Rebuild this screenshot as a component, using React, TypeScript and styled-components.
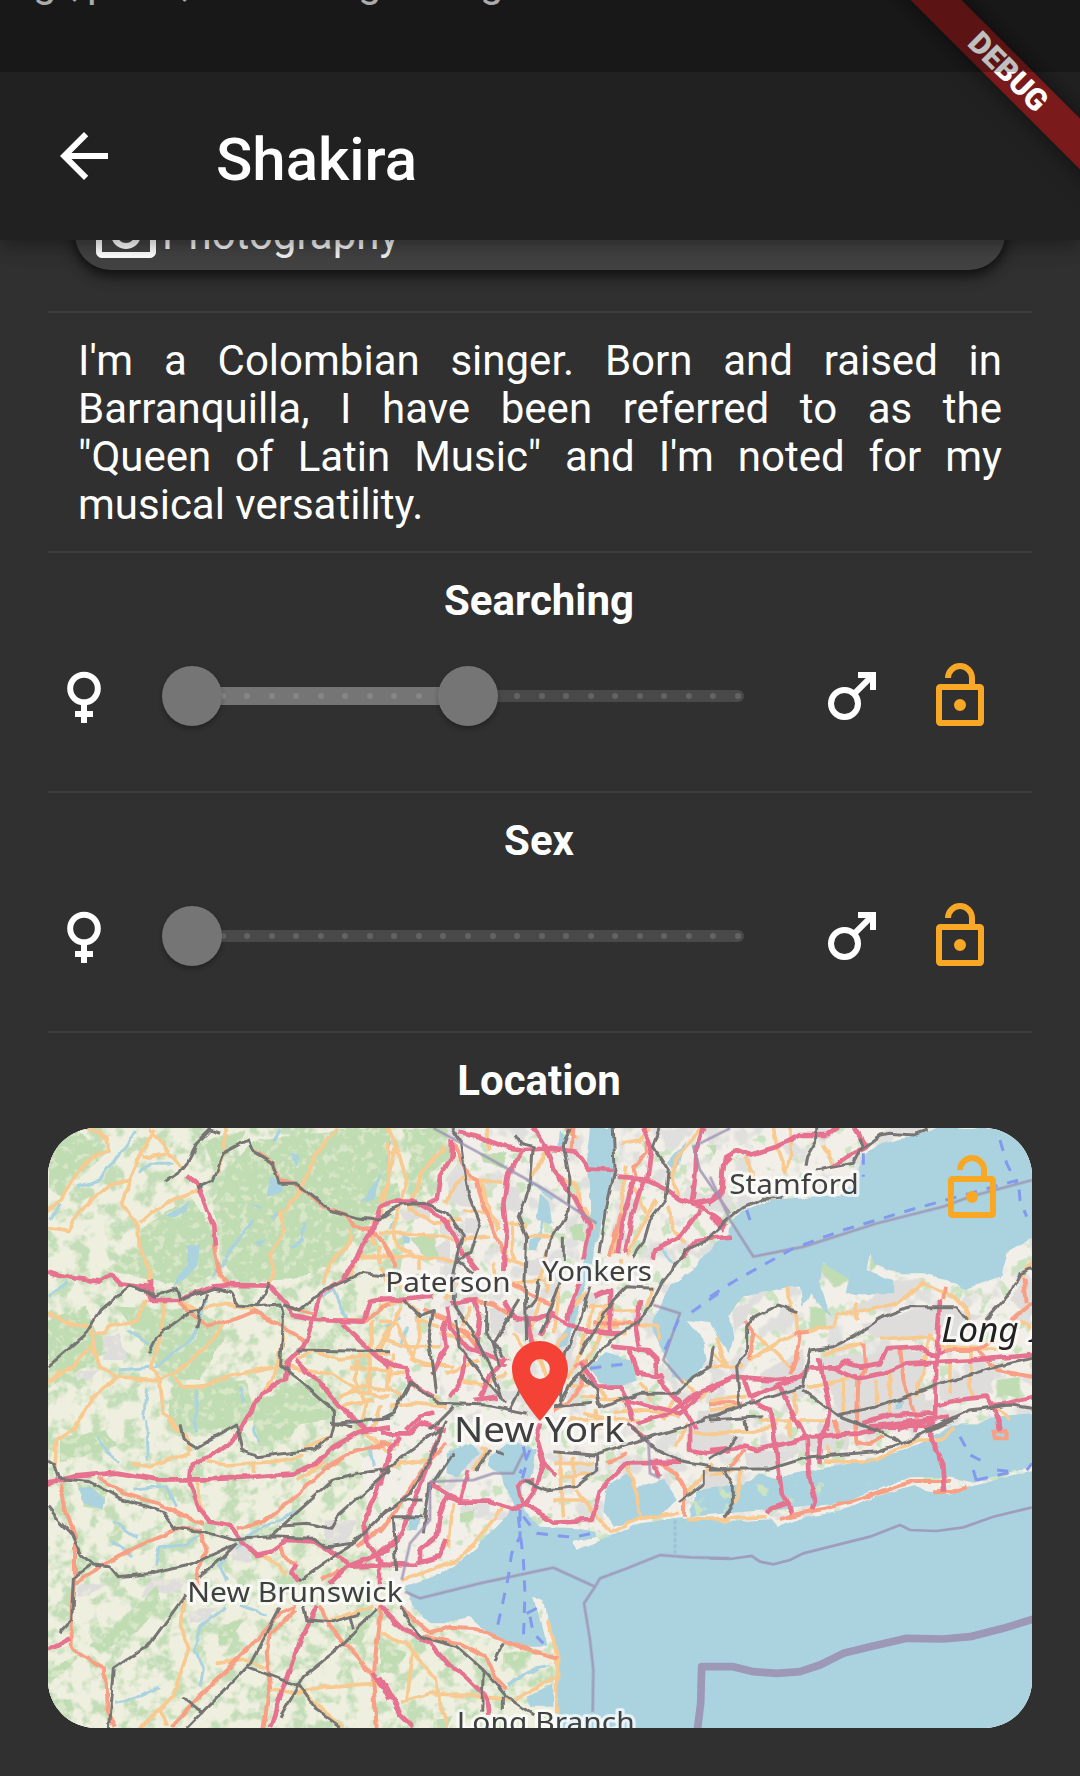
import React from "react";
import styled, { createGlobalStyle } from "styled-components";

const GlobalStyle = createGlobalStyle`
  * { box-sizing: border-box; }
  body { margin: 0; background: #303030; }
`;

const Screen = styled.div`
  position: relative;
  display: flex;
  flex-direction: column;
  width: 1080px;
  height: 1776px;
  overflow: hidden;
  background: #303030;
  color: #fff;
  font-family: Roboto, "Noto Sans", sans-serif;
`;

const Header = styled.header`
  position: relative;
  z-index: 2;
  flex: none;
  height: 240px;
  background: #212121;
  box-shadow: 0 6px 12px -3px rgba(0, 0, 0, 0.18), 0 10px 14px rgba(0, 0, 0, 0.1),
    0 3px 28px rgba(0, 0, 0, 0.1);
`;

const HiddenLine = styled.div`
  display: flex;
  height: 72px;
  overflow: hidden;
  font-size: 42px;
  line-height: 48px;
  color: #e4e4e4;
  span { display: block; width: 0; white-space: nowrap; margin-top: -42px; }
`;

const Gap = styled.i<{ $w: number }>`
  flex: none;
  width: ${(p) => p.$w}px;
`;

const Toolbar = styled.div`
  display: flex;
  align-items: center;
  height: 168px;
  padding-left: 48px;
  gap: 96px;
`;

const Title = styled.h1`
  margin: 8px 0 0;
  font-size: 60px;
  font-weight: 500;
  line-height: 70px;
`;

const Scrim = styled.div`
  position: absolute;
  z-index: 4;
  top: 0;
  left: 0;
  width: 100%;
  height: 72px;
  background: rgba(0, 0, 0, 0.25);
`;

const Banner = styled.div`
  position: absolute;
  z-index: 3;
  top: 54px;
  left: 858px;
  width: 300px;
  height: 36px;
  transform: rotate(45deg);
  background: #7b1a1a;
  box-shadow: 0 0 22px rgba(0, 0, 0, 0.55);
  text-align: center;
  font-size: 30.6px;
  font-weight: 900;
  line-height: 36px;
`;

const Body = styled.main`
  flex: 1;
  display: flex;
  flex-direction: column;
  overflow: hidden;
  padding: 0 48px;
`;

const Interest = styled.div`
  flex: none;
  display: flex;
  align-items: center;
  height: 84px;
  margin: -54px 27px 41px;
  padding: 6px 15px 0;
  border-radius: 36px;
  background: #424242;
  box-shadow: 0 6px 12px rgba(0, 0, 0, 0.5), 0 3px 18px rgba(0, 0, 0, 0.35);
  font-size: 42px;
  color: #fff;
`;

const InterestLabel = styled.span`
  padding-top: 6px;
  color: #f2f2f2;
`;

const Divider = styled.hr`
  flex: none;
  width: 100%;
  height: 2px;
  margin: 0;
  border: 0;
  background: #3d3d3d;
`;

const Bio = styled.p`
  flex: none;
  height: 238px;
  margin: 0;
  padding: 24px 30px 0;
  font-size: 42px;
  line-height: 48px;
  text-align: justify;
`;

const Section = styled.section<{ $tall?: boolean }>`
  flex: none;
  height: ${(p) => (p.$tall ? "auto" : "238px")};
`;

const Heading = styled.h2`
  margin: 0;
  padding: 24px 2px 0 0;
  text-align: center;
  font-size: 42px;
  font-weight: 700;
  line-height: 48px;
  height: 95px;
`;

const Row = styled.div`
  display: flex;
  align-items: center;
  height: 96px;
`;

const Icon = styled.svg<{ $size?: number }>`
  display: block;
  flex: none;
  width: ${(p) => p.$size ?? 72}px;
  height: ${(p) => p.$size ?? 72}px;
  fill: currentColor;
`;

const Amber = styled.div<{ $left: number }>`
  margin-left: ${(p) => p.$left}px;
  color: #f9a825;
`;

const Slider = styled.div`
  position: relative;
  display: flex;
  align-items: center;
  flex: none;
  width: 552px;
  height: 60px;
  margin: 0 72px;
`;

const Track = styled.div`
  width: 552px;
  height: 12px;
  border-radius: 6px;
  background: #494949;
`;

const Active = styled.div`
  position: absolute;
  left: 0;
  top: 21px;
  height: 18px;
  background: #757575;
`;

const Tick = styled.i<{ $on: boolean }>`
  position: absolute;
  top: 27px;
  width: 6px;
  height: 6px;
  border-radius: 50%;
  background: ${(p) => (p.$on ? "#868686" : "#636363")};
`;

const Thumb = styled.div`
  position: absolute;
  top: 0;
  width: 60px;
  height: 60px;
  margin-left: -30px;
  border-radius: 50%;
  background: #757575;
  box-shadow: 0 3px 5px rgba(0, 0, 0, 0.28);
`;

const MapCard = styled.div`
  position: relative;
  width: 984px;
  height: 600px;
  overflow: hidden;
  border-radius: 48px;
  background: #f2efe9;
`;

const MapArt = styled.svg`
  display: block;
  width: 984px;
  height: 600px;
`;

const MapLock = styled.div`
  position: absolute;
  top: 24px;
  right: 24px;
  color: #f9a825;
`;

const MapPin = styled.div`
  position: absolute;
  top: 205px;
  left: 443.5px;
  color: #f44336;
`;

const Female = () => (
  <Icon viewBox="0 0 24 24">
    <circle cx="12" cy="9.5" r="4.6" fill="none" stroke="currentColor" strokeWidth="2" />
    <path d="M11 14.5h2V17h2v2h-2v2h-2v-2H9v-2h2z" />
  </Icon>
);

const Male = () => (
  <Icon viewBox="0 0 24 24">
    <circle cx="9.5" cy="14.5" r="4.5" fill="none" stroke="currentColor" strokeWidth="2" />
    <path d="M20 4v6h-2V7.41l-4.7 4.7-1.41-1.41L16.59 6H14V4z" />
  </Icon>
);

const LockOpen = () => (
  <Icon viewBox="0 0 24 24">
    <path d="M18 20V10H6v10h12M18.600 8A1.4 1.4 0 0 1 20 9.400V20.600A1.4 1.4 0 0 1 18.600 22H5.400A1.4 1.4 0 0 1 4 20.600V9.400A1.4 1.4 0 0 1 5.400 8H15V6a3 3 0 0 0-6 0H7a5 5 0 0 1 10 0v2h1.600M12 17a2 2 0 1 1 0-4 2 2 0 0 1 0 4z" />
  </Icon>
);

const TICKS = Array.from({ length: 23 }, (_, i) => 6 + (i * 540) / 22);

function RangeSlider({ from, to }: { from: number; to?: number }) {
  const end = to ?? from;
  return (
    <Slider>
      <Track />
      {end > from && <Active style={{ width: end * 552 }} />}
      {TICKS.map((x, i) => (
        <Tick key={i} $on={x < end * 552} style={{ left: x - 3 }} />
      ))}
      <Thumb style={{ left: from * 552 }} />
      {end > from && <Thumb style={{ left: end * 552 }} />}
    </Slider>
  );
}

function Preference({ title, from, to }: { title: string; from: number; to?: number }) {
  return (
    <Section>
      <Heading>{title}</Heading>
      <Row>
        <Female />
        <RangeSlider from={from} to={to} />
        <Male />
        <Amber $left={36}><LockOpen /></Amber>
      </Row>
    </Section>
  );
}

type Tile = {
  x: number;
  y: number;
  green?: string;
  urban?: string;
  lake?: string;
  stream?: string;
  minor: string;
  trunk: string;
  motorway: string;
  rail: string;
  border?: string;
  ferry?: string;
};

/* Each tile is traced in its own local units; x and y place it on the map. */
const TILES: Tile[] = [
  {
    x: 0, y: 0,
    green: "M24 60L110 30 200 100 120 160 60 230 24 200ZM560 150L640 60 900 30 1050 24 1050 230 960 330 900 420 760 480 600 490 540 420 520 250ZM300 330L450 230 520 330 540 450 450 500 330 480 200 450 290 380ZM24 600L140 560 200 700 100 760 24 800ZM230 560L480 570 560 640 480 780 370 770 330 700ZM400 800L620 780 640 900 540 930 380 930ZM640 850L850 760 870 900 640 930ZM490 60L620 30 600 70 520 150Z",
    urban: "M190 650L240 640 260 720 190 720ZM560 180L600 190 590 230 560 220ZM820 800L870 840 860 890 820 860ZM110 750L180 750 150 780 110 775Z",
    lake: "M440 380L480 370 470 440 430 480 400 500 440 430ZM380 290L450 240 440 270 400 295ZM690 170L730 190 720 220 680 230ZM640 370L680 360 660 380ZM960 250L1000 200 1020 150 1010 230ZM750 100L780 110 770 140ZM630 250L660 260 650 270Z",
    stream: "M290 30L240 100 180 180 110 200M640 300L560 410 520 470M790 300L790 360 750 380M500 540L460 650 350 740 240 750M320 800L310 900M260 630L330 670M900 560L920 600M470 810L465 930M830 540L880 510 910 580M700 300L740 260M720 30L700 60M60 250L35 300M24 530L80 490M400 130L330 130 300 160M600 800L610 850",
    minor: "M140 24L200 50 210 90 150 115 105 170 60 240 24 275M24 325L85 335 110 290 160 230 210 195 270 180 300 110 330 55 345 24M330 24L350 55 400 110 430 150M310 110L380 100M270 180L245 250 290 310 295 380 330 450 325 500M300 310L340 275 410 235 470 210M24 575L80 610 150 615 160 690 180 740 230 770 360 780 430 740 500 680 560 600M150 640L190 640 210 620 290 600 320 540M24 785L100 740 150 680M230 770L160 830 100 930M370 540L370 620 335 740 360 780 370 880 420 930M400 770L430 800 490 800 560 770 720 735 870 760 960 820 1050 830M555 24L555 90 530 160M890 30L830 100 800 170 770 230 725 280 730 330 690 400 705 470 680 500M1050 160L1020 290M1040 60L1050 160M930 330L930 370 870 430 850 490M420 545L470 570 560 550 640 570M730 600L730 660 700 780 640 850M770 720L820 690 900 720 1050 700M960 700L940 780 980 850 960 930M1000 600L990 700 990 820M1050 620L1000 700M900 830L970 800 1050 810M1000 380L1000 300M1050 410L950 410 930 470M1020 850L1000 930M930 740L1050 750M900 860L1000 840M1020 380L1020 430",
    trunk: "M520 370L535 450 570 500M415 545L500 620 580 600 640 575 730 620 790 660M640 90L700 130 720 180 780 195 850 260 920 285 940 320 1000 330 1030 370 1050 410M1050 550L980 600 820 600M740 560L820 580",
    motorway: "M24 455L100 475 180 485 215 465 240 490 320 500 330 540 420 540 520 500 570 495 690 497 740 550 760 585 830 600 970 605 990 545 1050 535M330 480L330 540M440 165L470 190 490 240 520 320 525 380M1050 245L1020 260 1000 330 950 410 910 480 840 520 820 600 790 680 740 730 735 780 660 825 640 860 600 930M910 610L960 660 1010 710 1050 740M770 720L850 800 900 860 980 930",
    rail: "M375 185L420 155 440 130 470 70 510 30 540 40M470 205L520 180 550 100 625 60 640 95 700 130 720 190 775 190 870 270 960 295 1015 300 1050 275M24 740L130 650 180 570 270 495 315 510 340 530 410 505 420 540 520 505 570 515 590 555 650 560 720 555 730 600 722 735 800 800 880 870 880 910 950 905 1050 895M500 520L485 570 450 575 350 650 325 700M485 560L470 625M650 560L690 490M730 555L780 570 850 510 920 480 960 460 1050 470M770 690L1050 695",
  },
  {
    x: 1020, y: 0,
    green: "M70 30L200 24 210 110 140 170 100 240 80 190 90 110ZM0 180L50 190 60 240 0 240ZM90 350L160 345 180 420 120 400ZM300 100L380 100 370 140 310 130ZM570 320L610 310 615 370 580 360ZM980 70L1010 80 1000 110Z",
    urban: "M200 180L260 150 280 260 210 250ZM160 380L210 360 210 430 170 430ZM60 270L150 260 150 300 70 300ZM260 290L300 300 290 350 250 340ZM330 560L380 560 380 650 330 640ZM440 420L490 410 480 470 440 460ZM370 200L420 200 420 260 380 270ZM540 640L600 640 560 760 500 760ZM950 880L1050 860 1050 930 950 930Z",
    lake: "M630 24L700 24 700 140 680 250 660 330 640 420 600 540 560 680 530 690 580 560 610 430 630 330 630 200 620 110ZM620 740L680 700 750 720 770 780 720 800 660 790ZM480 220L510 250 520 310 470 300ZM450 360L480 350 470 390 450 390ZM860 130L920 60 900 130 880 150ZM70 340L90 350 85 370 70 370ZM540 30L560 60 550 90 535 80Z",
    stream: "M30 60L20 130M440 180L520 240M490 300L470 380M20 620L60 590M80 620L60 680M40 300L30 330M840 380L880 430",
    minor: "M24 24L50 80 30 160 5 240M50 80L80 180 60 250M200 80L130 150 100 230 100 260M60 250L40 320 50 380 100 410 230 420M80 260L160 310 250 300M0 340L110 340 250 360 330 350M240 170L300 180 370 190M200 250L220 200 260 160M370 300L440 320M0 410L120 410 120 450M400 300L400 430M440 350L520 350M540 180L590 190 600 260M610 260L640 330M560 24L590 60M500 90L470 150 450 170M720 70L780 60 810 24M960 30L900 100 870 170 900 230M740 140L720 280 700 400M760 200L800 280M830 240L780 330 740 410M860 260L880 330 920 370M400 490L500 480 500 520M0 560L60 540 110 570 120 650 90 720M60 560L20 650 0 690M20 660L80 680 180 680M180 640L230 650 300 640M100 800L180 840M30 860L100 850 200 860M540 500L520 640M580 560L620 520M640 560L600 700 560 780M700 540L640 690 600 740M680 570L780 570M700 600L830 620 840 660M560 800L640 790 680 830M600 830L740 840M900 780L960 830 1000 800M1000 700L1040 740M700 880L800 870 900 890M300 800L380 760M200 760L300 720M820 500L800 560M0 600L50 610 100 720 180 740M40 700L20 800 70 830M120 730L220 740M380 300L380 420 440 440M250 270L330 280M500 400L480 480M460 660L500 780 490 860M400 640L440 700 400 780M620 560L680 560 640 620M660 620L720 620M230 480L200 540M340 430L350 520M300 180L330 280 360 330M20 760L90 760M110 600L180 620M240 780L330 800M250 620L270 560M520 700L560 640M670 640L740 640M60 90L20 110M610 880L700 900M780 790L820 840M880 840L850 900M720 420L720 490M480 540L450 640M330 90L320 24M650 870L660 930M560 900L780 900M20 480L90 510M0 440L30 500",
    trunk: "M215 60L250 140 290 180 310 260 350 350 370 400M720 280L690 410M0 350L30 400 50 440M400 490L450 520 520 560M260 540L340 550 400 590M800 60L800 100 760 140 770 180M560 30L580 24 575 90M130 570L200 600 260 640 300 690M640 610L780 610M580 740L620 720 600 800 560 850 520 870M370 410L370 450",
    motorway: "M0 260L40 245 100 245 130 260 180 290 230 350 250 400 290 450M130 260L170 240 180 170 215 110 215 60M235 35L300 50 370 80 430 90 500 85 590 95 625 145 700 150M430 90L385 160 370 250 380 340 370 450M460 24L500 85 520 150 580 230 630 320 610 420M710 170L790 175 860 210 900 240 960 260 1040 320M760 180L730 290 712 400M790 180L758 280 735 400M790 24L815 80 800 190M970 24L950 90 945 180 935 250M940 250L1000 240 1025 200 1030 130 1050 110M960 270L900 350 820 390 815 420M1050 350L950 360 900 420M0 535L60 540 160 530M200 560L210 620 260 680 360 720 380 740M280 540L300 600 290 690M370 540L400 590 460 600 510 580 540 600 600 630 720 640M600 480L560 600M210 550L290 540M0 715L50 740 80 745 90 790 160 830M190 600L200 680 160 760M260 700L240 790 210 830M380 710L330 770 300 830M440 600L460 690M520 570L480 650M640 530L690 510 690 640M690 680L800 690 830 720 830 760 850 800 900 850 950 930M600 730L650 800 720 800 740 840 760 900M780 540L770 620 780 680M750 690L770 760 850 770M1050 780L930 830 870 880 770 910M740 840L900 880 960 820M280 840L350 830M80 930L120 890 160 880",
    rail: "M215 24L240 60 250 130 265 220 300 310 270 400 230 420 220 470 220 550 280 640 320 720 370 840M0 290L60 255 130 250 200 280 250 350 230 420 280 460M405 45L420 70 460 80 450 200 415 290 440 350 435 480 440 660M570 24L550 80 570 180 565 270 510 360 500 410M550 350L550 420M700 24L705 150 680 260 660 400M630 500L600 600 560 700 540 860M840 24L820 80 865 150 855 240 810 300 790 370 760 410M1050 290L980 360 920 390 850 480 810 560 770 610 690 660 640 720 580 780 540 850M480 480L470 530 440 570M540 490L500 600 480 640M70 540L120 590 160 575 145 650 160 740 170 820M320 540L320 640 360 690 370 710M420 540L340 670 360 740M820 505L740 500 700 540 600 700M0 900L40 880 90 790 180 850 320 855 440 880M390 870L420 810M220 860L150 930M520 860L640 850M600 760L650 810 660 860 780 820 890 820 940 770 990 740 1000 680M920 920L1050 870M230 600L240 680 300 760 380 850",
    border: "M160 24L300 100 480 200 650 310M1050 25L940 80 960 150 1050 280M820 555L900 580 850 720 910 790",
    ferry: "M1015 520L930 580M895 600L850 700M630 745L750 730",
  },
  {
    x: 2010, y: 0,
    green: "M330 430L420 450 430 480 370 500 340 470ZM860 780L930 770 930 830 860 830ZM480 410L500 430 480 460ZM300 560L350 570 350 620 300 640Z",
    urban: "M70 570L130 540 110 600 70 640ZM450 610L660 560 760 570 700 620 640 660 500 660ZM150 760L280 690 280 800 160 810ZM400 590L560 480 640 480 560 550ZM320 710L640 690 640 850 380 860ZM690 780L850 750 850 820 690 840ZM900 540L966 470 966 600ZM380 850L660 840 660 930 400 930ZM730 560L820 590 700 620Z",
    lake: "M780 930L850 890 966 880 966 930ZM560 840L580 840 575 865 560 865Z",
    minor: "M190 24L200 80 230 160 240 100 240 24M340 70L370 130M110 110L130 180M235 500L240 560 260 580 260 640M130 640L190 690 250 750M250 640L180 680 120 720M260 640L370 620 380 580 440 580 560 550 640 490 720 530 770 560 775 610M440 550L440 600M340 700L460 670M0 740L100 740M20 650L50 740M510 660L660 650 700 680 900 690M660 640L640 750 620 830M780 690L780 800 790 830M290 800L440 770M150 900L350 900M250 810L260 870 230 930M0 840L110 830M930 600L966 620M966 430L930 470M400 780L400 880M500 780L500 860M0 870L80 860M540 760L540 880M720 720L720 820M850 850L900 900",
    trunk: "M105 600L130 640 120 720M270 630L260 720 240 760M250 640L300 635M460 670L465 740 445 780 440 930M570 680L580 780 620 900M700 690L800 690 860 750 966 770M800 690L850 660M905 600L966 550M940 470L950 550M0 850L100 850M700 540L705 500",
    motorway: "M0 250L30 230 35 180 45 110 80 90 120 105 200 80 270 45 350 45M435 24L470 80 410 110 370 140M350 45L380 24M0 290L40 330M0 810L70 770 200 780 270 770 300 745 380 745 400 725 450 740 510 730 530 685 620 680 670 705 700 690M370 745L440 775 520 760 590 730 800 720 966 705M330 710L340 770 360 860 350 930M690 540L680 700 675 890 660 930M300 745L250 780 120 830 100 770M210 800L240 860 270 930M120 840L180 870 190 930M680 855L740 840 830 830 850 860 966 830M460 910L540 885 670 880M480 920L720 890M850 860L870 930M560 930L700 890",
    rail: "M0 350L50 300 100 260 160 235 220 232M650 30L610 45 540 40 510 45 450 90 430 130 320 150M450 50L460 80M320 24L320 60 290 110 285 140M265 575L200 555 130 590 110 620 110 700 80 740 90 860M0 890L90 860 280 800 290 740 300 690 370 680 430 650 500 600 600 560 740 560 770 600M280 810L380 885 500 930M380 885L500 860 700 790 840 745 966 715M650 930L780 870 900 855 966 865M830 600L900 520 930 460 966 445M0 900L160 890M110 900L110 930",
    border: "M0 170L60 300 130 410 280 380 500 310 700 260 780 230 966 180",
    ferry: "M0 530L70 485 160 435 250 385 400 330 600 270 780 220 925 180 930 240 950 290M870 60L890 130 920 190M460 100L460 170M110 270L120 300",
  },
  {
    x: 0, y: 900,
    green: "M150 680L250 590 350 500 370 560 270 650 180 700ZM24 750L120 700 90 740 24 790ZM110 190L200 200 190 270 130 260ZM60 50L200 30 230 80 120 110 60 120ZM650 20L780 10 750 50 660 80ZM540 620L620 590 560 680 530 680ZM920 620L1000 600 960 680 910 670ZM24 840L100 840 100 870 40 870Z",
    urban: "M340 470L440 480 420 510 300 530ZM850 300L950 300 930 370 860 370ZM570 380L640 370 630 430 580 420ZM450 570L530 560 500 610 450 610ZM110 490L200 490 150 530 110 530Z",
    lake: "M115 210L150 200 195 240 190 265 130 250Z",
    stream: "M170 50L200 100 240 125M320 0L325 120M280 210L380 200 410 260M220 305L290 350M210 360L280 410M480 340L440 375 360 380 350 440M560 400L540 440 560 480M560 560L480 620 465 690 490 750 480 800M640 20L660 70M600 560L680 585M225 850L280 840 360 800M590 390L650 330 780 270M460 0L470 40M990 80L1000 140",
    minor: "M45 140L50 60 120 10M275 130L330 140 450 100M380 0L440 50 450 95M500 125L560 135 700 125 790 110M640 130L640 160M660 400L690 420 740 465M470 180L490 290M430 530L425 620 445 690 420 760 400 830 330 900 300 924M530 730L620 720 680 745M360 870L380 920M690 810L780 820 850 800 1010 790M780 810L860 880 910 920M870 600L1000 560M770 180L850 130M790 90L870 45M980 40L1050 100",
    trunk: "M60 190L80 280 105 350 105 450 95 560 95 680 130 710 195 745 200 870 225 920M180 175L250 220 350 250 450 295 490 310M100 490L200 430 330 360 410 325 480 330M480 340L500 390 480 430 465 500M590 325L670 305 780 220 850 150 950 90 1050 70M720 370L740 420 770 430M390 924L500 810 620 690 720 580 770 560M770 570L690 640 680 700 690 800 670 924M840 560L870 620 950 710 1020 790M1020 560L1000 780 1010 924M840 480L900 450M950 380L1050 300",
    motorway: "M24 188L100 170 230 158 350 178 500 178 620 172 760 160 830 130 880 80 960 35 1050 22M620 0L580 60 510 110 455 130 450 190 480 270 510 305 570 315 610 370 650 405 690 395 740 360 830 365 900 410M24 690L90 655M690 924L730 800 780 660 830 560M1050 100L1000 240 970 310 980 370 1020 420 1020 500M870 490L920 440 1050 390M900 410L930 440 1050 435M770 430L755 460 780 480M1000 760L1030 800 1050 840",
    rail: "M24 120L40 130 55 175 150 185 240 235 370 275 405 325 490 335 580 360 690 350 820 355 860 380 940 370M24 260L60 305 95 340 120 400 160 435 210 440 235 470 340 460 450 435 590 370M420 10L430 60 470 85 510 60 590 15 605 90 650 110 820 90 870 50 880 10M150 435L100 470 95 600 60 640M440 520L330 670 220 745 205 924M440 924L630 730 720 560M620 740L700 770 780 800 830 870 900 920M780 480L850 430 930 380 1050 260M690 350L880 180 950 160 1050 148M730 315L800 310 870 325 890 290 1050 150M590 370L540 420 480 470M720 890L790 770 890 690 1010 570M790 560L800 600 880 605 960 580M930 590L940 625M425 830L490 880M870 10L940 20",
  },
  {
    x: 1020, y: 900,
    green: "M240 280L290 270 270 310 240 310ZM370 700L450 690 430 740 370 740ZM0 660L80 700 40 760 0 750ZM160 900L220 890 200 924 160 924Z",
    urban: "M930 30L1050 20 1050 90 940 90ZM980 130L1050 150 1050 220 970 230Z",
    lake: "M680 200L740 160 770 200 850 180 890 240 850 280 700 320 670 280ZM200 100L270 70 300 100 230 170 200 160ZM380 790L460 740 520 730 430 770 390 800ZM440 830L520 790 520 860 450 860ZM950 210L1030 200 1040 280 930 290ZM90 280L120 290 110 330 90 330Z",
    minor: "M70 480L150 450 230 420 300 350 370 260M220 250L205 380M740 130L770 220 780 290M650 290L690 340 780 295 900 280M920 295L1050 300M500 600L530 700 530 880M0 640L80 670 170 780 180 860 200 920M100 690L80 850M60 850L150 820 300 830 400 840 530 770M300 80L320 90 280 150M520 130L640 130M540 100L550 290M520 240L620 240M590 210L650 290M0 150L60 130 140 120M920 10L890 80M1000 130L920 220M540 170L640 160M580 110L580 210M940 40L1050 40",
    trunk: "M60 560L150 640 210 620 290 625 380 665 450 690 530 712M130 650L240 670 320 710 350 780 380 810M0 340L60 250 140 130 200 70M680 130L740 100M840 130L890 160 915 210 915 290M0 70L60 70",
    motorway: "M0 430L110 435M0 560L60 620 150 670 200 730 260 770 320 830 325 884M0 770L60 880 100 920M120 430L120 390 170 350 180 280 200 230 240 245M150 190L240 245 330 245 390 265 430 255 490 285 520 305 635 300 660 210 740 130 900 128M0 40L90 40 120 10 200 30M265 150L240 240M430 260L415 200 430 180 460 180M430 260L460 220 490 130 470 60 480 10M490 130L530 170M110 430L180 410 200 360M740 10L800 60M930 20L930 90 980 100 1050 90M0 400L60 350M180 40L100 250 60 350M0 200L30 90 60 50M820 130L840 170",
    rail: "M200 0L180 40 150 120 90 220 0 290M0 160L80 100 190 20M60 560L120 650 230 680 310 750 380 830 460 885M310 750L305 875M370 670L345 720M370 830L370 870M160 190L220 100M150 190L130 340M40 290L50 450M430 180L500 210 590 200 650 150 650 100M520 95L640 105 780 60 930 15M740 10L830 90 900 125 1050 150M970 150L970 190 900 245M330 90L290 150M350 90L370 100M40 290L130 290M60 240L130 240",
    border: "M75 515L120 535 300 490 520 443 645 500 660 475 740 445 840 405 930 412 1050 415M645 500L612 550 630 660 640 750 638 875M150 185L280 180 340 160 400 160 430 100M150 190L150 300 90 370 65 480M805 60L810 160 840 175",
    ferry: "M420 270L420 350 395 400 385 470 370 540 350 630M415 290L430 420 435 520 430 660M430 290L470 340 580 352 660 335M440 580L480 560M450 590L460 640 490 670M430 80L440 130 420 200M450 90L420 160",
  },
  {
    x: 2010, y: 900,
    green: "M380 60L400 60 395 85 380 85ZM780 10L820 10 800 30Z",
    urban: "M0 40L100 50 90 80 0 90ZM100 100L280 90 200 140 110 140ZM320 10L420 0 410 90 340 90ZM370 130L460 130 400 160Z",
    minor: "M0 40L130 35 200 10M240 0L240 50M350 80L360 110M340 120L480 125 560 90 620 60 690 60 730 20M90 150L80 250M0 298L170 290M0 165L70 150",
    trunk: "M210 298L270 280 350 265 460 235 610 183 720 183M670 217L730 215 770 203M435 70L480 75 520 50M60 140L100 90M370 0L390 40M435 0L440 80M850 35L890 30 890 55 855 55Z",
    motorway: "M0 90L100 80 140 90 230 70 300 50 450 40 530 20 660 20M185 0L200 100 215 220 250 280M260 0L290 60 295 150 315 240 305 270M355 0L330 60 325 130M660 0L665 60 700 130 705 215M230 250L180 265 170 280M865 0L865 25M620 0L620 40",
    rail: "M0 147L180 147 300 110 500 95 600 60 730 0M0 120L60 80 80 50M40 150L70 200 70 250 45 290M410 0L500 30 570 65M105 0L110 30",
    border: "M0 415L60 417 125 408 150 425 190 433 240 420 280 400 480 350 570 315 600 330 680 333 760 322 850 290 966 262",
    ferry: "M750 50L780 105 820 125M790 150L800 185M800 180L910 155 860 150M950 150L966 130",
  },
];

const SOUND =
  "M1830 620L1890 500 1960 450 2000 400 2060 340 2080 300 2110 270 2190 240 2310 230 2400 225 2450 180 2460 120 2510 75 2650 40 2690 24H2990V345L2900 400 2880 470 2770 510 2730 480 2650 460 2570 460 2500 430 2490 400 2480 450 2560 480 2560 520 2420 520 2430 480 2350 430 2340 490 2370 590 2310 520 2290 560 2280 500 2250 500 2110 530 2070 590 2080 650 2070 700 2040 660 2010 610 1940 600 1990 660 2000 720 1950 790 1900 770 1870 700Z";

const OCEAN =
  "M1090 1400L1180 1370 1250 1330 1320 1270 1400 1190 1420 1150 1390 1100 1380 1060 1340 1040 1350 1010 1410 960 1490 990 1480 1050 1450 1090 1440 1160 1500 1220 1610 1225 1665 1235 1670 1250 1600 1270 1610 1290 1710 1250 1800 1210 1920 1195 2070 1205 2190 1198 2210 1222 2260 1200 2410 1170 2510 1130 2620 1095 2650 1112 2730 1125 2790 1100 2990 1050V1840H1550V1600L1520 1500 1510 1440 1480 1430 1490 1470 1500 1500 1520 1580 1450 1580 1360 1550 1290 1490 1210 1510 1170 1510 1120 1460Z";

const BAYS =
  "M2010 1110L2110 1090 2160 1060 2200 1075 2370 1040 2570 1000 2660 960 2730 915 2770 910 2990 920V1035L2800 1088 2730 1070 2610 1072 2510 1110 2410 1148 2260 1165 2010 1183Z";

const Lines = ({ k, color, w }: { k: "minor" | "trunk" | "motorway" | "rail" | "stream"; color: string; w: number }) => (
  <g fill="none" stroke={color} strokeWidth={w} strokeLinejoin="round">
    {TILES.map((t, i) => t[k] && <path key={i} transform={`translate(${t.x} ${t.y})`} d={t[k]} />)}
  </g>
);

const Areas = ({ k, color }: { k: "green" | "urban" | "lake"; color: string }) => (
  <g fill={color}>
    {TILES.map((t, i) => t[k] && <path key={i} transform={`translate(${t.x} ${t.y})`} d={t[k]} />)}
  </g>
);

type Place = { name: string; x: number; y: number; size: number; w: number; italic?: boolean };

const PLACES: Place[] = [
  { name: "Stamford", x: 2068, y: 222, size: 84, w: 388 },
  { name: "Paterson", x: 1036, y: 515, size: 84, w: 376 },
  { name: "Yonkers", x: 1506, y: 483, size: 84, w: 330 },
  { name: "New York", x: 1242, y: 966, size: 102, w: 512 },
  { name: "New Brunswick", x: 442, y: 1445, size: 84, w: 646 },
  { name: "Long Branch", x: 1250, y: 1836, size: 84, w: 534 },
  { name: "Long", x: 2704, y: 665, size: 102, w: 232, italic: true },
  { name: "Island", x: 2967, y: 665, size: 102, w: 290, italic: true },
];

const speckle = (id: string, seed: number, freq: number, rgb: string, gain: number, cut: number) => (
  <filter id={id} x="0" y="0" width="1" height="1" colorInterpolationFilters="sRGB">
    <feTurbulence type="fractalNoise" baseFrequency={freq} numOctaves="3" seed={seed} />
    <feColorMatrix values={`0 0 0 0 ${rgb.split(" ")[0]} 0 0 0 0 ${rgb.split(" ")[1]} 0 0 0 0 ${rgb.split(" ")[2]} ${gain} 0 0 0 ${cut}`} />
    <feComposite in2="SourceGraphic" operator="in" />
  </filter>
);

const WEST = "M24 24H1200L1260 120 1100 330 1040 700 960 1000 1000 1300 1120 1500 1540 1600V1824H24Z";

function RegionMap() {
  return (
    <MapArt viewBox="24 24 2952 1800">
      <defs>
        {speckle("woods", 4, 0.02, "0.765 0.868 0.72", 6, -2.85)}
        {speckle("fields", 11, 0.04, "0.935 0.94 0.86", 7, -3.75)}
        {speckle("parks", 7, 0.022, "0.80 0.89 0.76", 10, -5.9)}
        {speckle("built", 23, 0.014, "0.875 0.875 0.865", 9, -5.0)}
        {/* Wobbles traced lines and softens them like an upscaled map tile. */}
        <filter id="rough" x="0" y="0" width="1" height="1" colorInterpolationFilters="sRGB">
          <feTurbulence type="fractalNoise" baseFrequency="0.022" numOctaves="2" seed="3" />
          <feDisplacementMap in="SourceGraphic" scale="18" xChannelSelector="R" yChannelSelector="G" />
          <feGaussianBlur stdDeviation="1.6" />
        </filter>
      </defs>
      <rect x="24" y="24" width="2952" height="1800" fill="#f2efe9" />
      <rect x="24" y="24" width="2952" height="1800" filter="url(#parks)" />
      <path d="M1200 24H2976V1200H1200Z" filter="url(#built)" />
      <path d={WEST} fill="#efefe0" />
      <path d={WEST} filter="url(#woods)" />
      <g filter="url(#rough)">
        <Areas k="urban" color="#dedddb" />
        <Areas k="green" color="#c0dcb3" />
      </g>
      <path d={WEST} filter="url(#fields)" opacity="0.5" />
      <g filter="url(#rough)">
        <rect x="24" y="24" width="2952" height="1800" fill="none" />
        <g fill="#aad3df">
          <path d={SOUND} />
          <path d={OCEAN} />
          <path d={BAYS} />
        </g>
        <Areas k="lake" color="#aad3df" />
        <Lines k="stream" color="#aad3df" w={9} />
      </g>
      <path d="M2030 1100L2120 1090 2230 1100 2360 1080 2370 1130 2250 1150 2040 1170ZM2420 1120L2500 1085 2520 1100 2440 1130ZM1960 1140L2050 1120 2060 1180 1970 1190Z" filter="url(#parks)" />
      <g filter="url(#rough)">
        <rect x="24" y="24" width="2952" height="1800" fill="none" />
        <Lines k="minor" color="#f8ca90" w={11} />
        <Lines k="trunk" color="#f9a084" w={12} />
        <Lines k="motorway" color="#e7728f" w={14} />
        <Lines k="rail" color="#777675" w={9} />
      </g>
      <g fill="none" stroke="#9d90b1" strokeWidth="8" opacity="0.8">
        {TILES.map((t, i) => t.border && <path key={i} transform={`translate(${t.x} ${t.y})`} d={t.border} />)}
      </g>
      <path d="M1905 1200V1310" stroke="#9fc0d2" strokeWidth="9" strokeDasharray="12 6" />
      <g fill="none" stroke="#8399ee" strokeWidth="9" strokeDasharray="34 30">
        {TILES.map((t, i) => t.ferry && <path key={i} transform={`translate(${t.x} ${t.y})`} d={t.ferry} />)}
      </g>
      <path
        fill="none"
        stroke="#9c98b6"
        strokeWidth="23"
        strokeLinejoin="round"
        d="M1972 1830L1982 1750 1985 1640H2080L2140 1655 2210 1660 2280 1655 2340 1635 2410 1600 2490 1580 2600 1555 2710 1557 2790 1550 2890 1525 2990 1494"
      />
      <g
        fontFamily="'Noto Sans', 'Open Sans', sans-serif"
        stroke="#fff"
        strokeOpacity="0.7"
        strokeWidth="18"
        strokeLinejoin="round"
        style={{ paintOrder: "stroke" }}
      >
        {PLACES.map((p) => (
          <text
            key={p.name}
            x={p.x}
            y={p.y}
            fontSize={p.size}
            textLength={p.w}
            lengthAdjust="spacingAndGlyphs"
            fontStyle={p.italic ? "italic" : "normal"}
            fill={p.italic ? "#222" : "#404040"}
          >
            {p.name}
          </text>
        ))}
      </g>
    </MapArt>
  );
}

export default function App() {
  return (
    <Screen>
      <GlobalStyle />
      <Header>
        <HiddenLine>
          <Gap $w={33} /><span>g</span>
          <Gap $w={39} /><span>,</span>
          <Gap $w={15} /><span>p</span>
          <Gap $w={95} /><span>,</span>
          <Gap $w={176} /><span>g</span>
          <Gap $w={122} /><span>g</span>
        </HiddenLine>
        <Toolbar>
          <Icon viewBox="0 0 24 24">
            <path d="M20 11H7.830l5.590-5.590L12 4l-8 8 8 8 1.410-1.410L7.830 13H20v-2z" />
          </Icon>
          <Title>Shakira</Title>
        </Toolbar>
      </Header>
      <Banner>DEBUG</Banner>
      <Scrim />
      <Body>
        <Interest>
          <Icon viewBox="0 0 24 24">
            <path d="M20 5h-3.170L15 3H9L7.170 5H4c-1.100 0-2 .9-2 2v12c0 1.100.9 2 2 2h16c1.100 0 2-.9 2-2V7c0-1.100-.9-2-2-2zm0 14H4V7h16v12zM12 8c-2.760 0-5 2.240-5 5s2.240 5 5 5 5-2.240 5-5-2.240-5-5-5zm0 8c-1.650 0-3-1.350-3-3s1.350-3 3-3 3 1.350 3 3-1.350 3-3 3z" />
          </Icon>
          <InterestLabel>Photography</InterestLabel>
        </Interest>
        <Divider />
        <Bio>
          I'm a Colombian singer. Born and raised in Barranquilla, I have been referred to as the "Queen of Latin
          Music" and I'm noted for my musical versatility.
        </Bio>
        <Divider />
        <Preference title="Searching" from={0} to={0.5} />
        <Divider />
        <Preference title="Sex" from={0} />
        <Divider />
        <Section $tall>
          <Heading>Location</Heading>
          <MapCard>
            <RegionMap />
            <MapPin>
              <Icon $size={96} viewBox="0 0 24 24">
                <path d="M12 2C8.130 2 5 5.130 5 9c0 5.250 7 13 7 13s7-7.750 7-13c0-3.870-3.130-7-7-7zm0 9.500a2.500 2.500 0 1 1 0-5 2.500 2.500 0 0 1 0 5z" />
              </Icon>
            </MapPin>
            <MapLock><LockOpen /></MapLock>
          </MapCard>
        </Section>
      </Body>
    </Screen>
  );
}
